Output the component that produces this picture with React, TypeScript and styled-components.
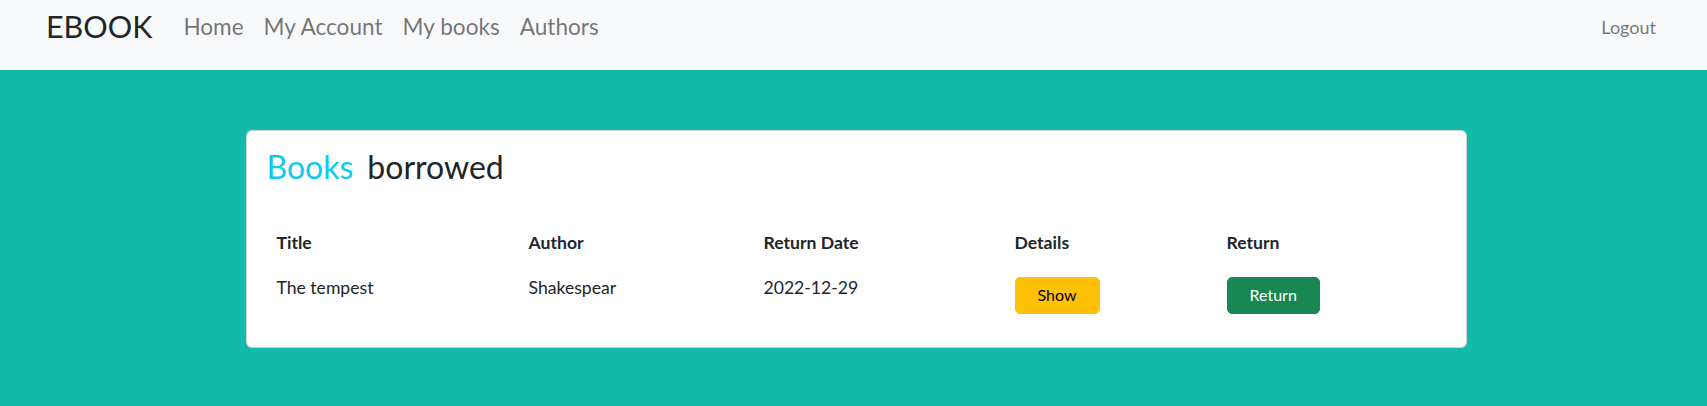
import React from "react";
import styled, { createGlobalStyle } from "styled-components";

const GlobalStyle = createGlobalStyle`
  html, body {
    margin: 0;
    padding: 0;
    background: #11baab;
    font-family: "Lato", "Noto Sans", sans-serif;
    color: #212529;
  }
  * { box-sizing: border-box; }
`;

const Page = styled.div`
  min-height: 406px;
  background: #11baab;
`;

const NavBar = styled.nav`
  height: 70px;
  background: #f8f9fa;
  display: flex;
  align-items: center;
  padding: 0 40px 16px 46px;
`;

const Brand = styled.a`
  font-size: 30.5px;
  font-weight: 400;
  color: #212529;
  text-decoration: none;
  margin-right: 21px;
  line-height: 1;
  margin-top: -1px;
`;

const NavLinks = styled.div`
  display: flex;
  align-items: center;
  flex: 1;
`;

const NavLink = styled.a`
  font-size: 22.6px;
  color: rgba(0, 0, 0, 0.55);
  text-decoration: none;
  padding: 0 10px;
  line-height: 1;
`;

const Logout = styled.a`
  font-size: 18px;
  color: rgba(0, 0, 0, 0.55);
  text-decoration: none;
  padding: 0 11px;
  line-height: 1;
`;

const Main = styled.main`
  padding: 60px 0 60px;
  display: flex;
  justify-content: center;
`;

const Card = styled.section`
  width: 1221px;
  margin-left: 5px;
  background: #fff;
  border: 1px solid rgba(0, 0, 0, 0.175);
  border-radius: 6px;
  padding: 17px 20px 25px;
`;

const Title = styled.h2`
  margin: 0 0 36px;
  font-size: 32px;
  font-weight: 400;
  line-height: 38px;
  display: flex;
  gap: 14px;
`;

const Accent = styled.span`
  color: #0dcaf0;
`;

const Table = styled.table`
  width: calc(100% - 2px);
  margin-left: 2px;
  border-collapse: collapse;
  table-layout: fixed;
  font-size: 17.6px;
`;

const HeadCell = styled.th`
  text-align: left;
  font-weight: 700;
  padding: 8px 8px 11px;
  line-height: 26px;
  vertical-align: bottom;
`;

const Cell = styled.td`
  padding: 8px;
  line-height: 26px;
  vertical-align: top;
`;

const Button = styled.button<{ $variant: "warning" | "success" }>`
  font-family: inherit;
  font-size: 16px;
  line-height: 24px;
  border: 1px solid
    ${(p) => (p.$variant === "warning" ? "#ffc107" : "#198754")};
  background: ${(p) => (p.$variant === "warning" ? "#ffc107" : "#198754")};
  color: ${(p) => (p.$variant === "warning" ? "#000" : "#fff")};
  border-radius: 5px;
  padding: 5px 22px 6px;
  margin-top: 2px;
  cursor: pointer;
`;

const rows = [
  { title: "The tempest", author: "Shakespear", date: "2022-12-29" },
];

export default function App() {
  return (
    <Page>
      <GlobalStyle />
      <NavBar>
        <Brand href="#">EBOOK</Brand>
        <NavLinks>
          <NavLink href="#">Home</NavLink>
          <NavLink href="#">My Account</NavLink>
          <NavLink href="#">My books</NavLink>
          <NavLink href="#">Authors</NavLink>
        </NavLinks>
        <Logout href="#">Logout</Logout>
      </NavBar>
      <Main>
        <Card>
          <Title>
            <Accent>Books</Accent>
            <span>borrowed</span>
          </Title>
          <Table>
            <colgroup>
              <col style={{ width: 252 }} />
              <col style={{ width: 235 }} />
              <col style={{ width: 251 }} />
              <col style={{ width: 212 }} />
              <col />
            </colgroup>
            <thead>
              <tr>
                <HeadCell>Title</HeadCell>
                <HeadCell>Author</HeadCell>
                <HeadCell>Return Date</HeadCell>
                <HeadCell>Details</HeadCell>
                <HeadCell>Return</HeadCell>
              </tr>
            </thead>
            <tbody>
              {rows.map((r) => (
                <tr key={r.title}>
                  <Cell>{r.title}</Cell>
                  <Cell>{r.author}</Cell>
                  <Cell>{r.date}</Cell>
                  <Cell>
                    <Button $variant="warning">Show</Button>
                  </Cell>
                  <Cell>
                    <Button $variant="success">Return</Button>
                  </Cell>
                </tr>
              ))}
            </tbody>
          </Table>
        </Card>
      </Main>
    </Page>
  );
}
